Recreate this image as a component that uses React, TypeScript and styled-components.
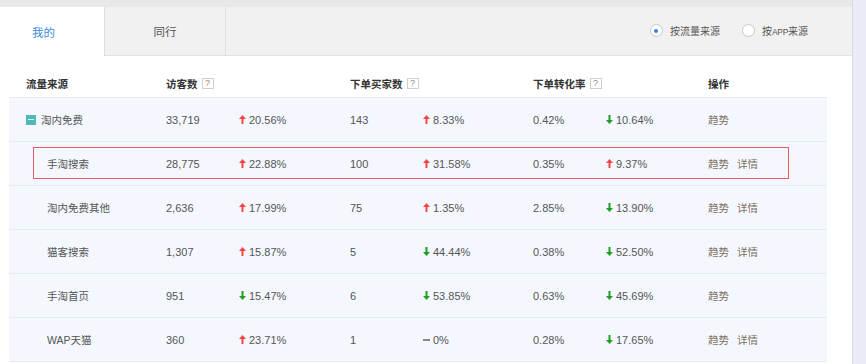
import styled, { createGlobalStyle } from 'styled-components';

const GlobalStyle = createGlobalStyle`
    html, body {
        margin: 0;
        padding: 0;
        background: #e9ecf6;
    }
    body {
        font-family: "Liberation Sans", Arial, "Noto Sans CJK SC", sans-serif;
        font-size: 11px;
        color: #555;
    }
`;

const Page = styled.div`
    display: flex;
    width: 866px;
    height: 364px;
    overflow: hidden;
    background: #e9ecf6;
`;

const Panel = styled.div`
    width: 852px;
    background: #fff;
    border-right: 1px solid #dcdcdc;
    display: flex;
    flex-direction: column;
`;

const TopBand = styled.div`
    height: 7px;
    background: #e8e8e8;
`;

const TabBar = styled.div`
    display: flex;
    height: 48px;
    background: #f1f1f1;
    border-bottom: 1px solid #e2e2e2;
`;

const Tab = styled.div<{ $active?: boolean; $width: number }>`
    width: ${(p) => p.$width}px;
    display: flex;
    align-items: center;
    justify-content: center;
    box-sizing: border-box;
    font-size: 11.5px;
    color: ${(p) => (p.$active ? '#3c8de0' : '#555')};
    background: ${(p) => (p.$active ? '#fff' : 'transparent')};
    border-right: 1px solid #dedede;
    margin-bottom: ${(p) => (p.$active ? '-1px' : '0')};
    padding-right: ${(p) => (p.$active ? '17px' : '0')};
`;

const RadioGroup = styled.div`
    margin-left: auto;
    display: flex;
    align-items: center;
    gap: 22px;
    padding-right: 44px;
    padding-bottom: 1px;
`;

const RadioItem = styled.label`
    display: flex;
    align-items: center;
    gap: 7px;
    font-size: 10px;
    color: #555;
`;

const Latin = styled.span`
    font-size: 8.5px;
    letter-spacing: -0.3px;
`;

const RadioCircle = styled.span<{ $checked?: boolean }>`
    width: 11px;
    height: 11px;
    border-radius: 50%;
    border: 1px solid #c8c8c8;
    background: #fff;
    display: flex;
    align-items: center;
    justify-content: center;
    &::after {
        content: '';
        width: 4px;
        height: 4px;
        border-radius: 50%;
        background: ${(p) => (p.$checked ? '#2f86e8' : 'transparent')};
    }
`;

const Content = styled.div`
    padding: 14px 25px 0 9px;
`;

const columns = '157px 73px 111px 73px 110px 73px 102px 1fr';

const HeaderRow = styled.div`
    display: grid;
    grid-template-columns: ${columns};
    height: 27px;
    align-items: center;
    border-bottom: 1px solid #e6ebf3;
    font-weight: bold;
    font-size: 10.5px;
    color: #333;
`;

const HeaderCell = styled.div<{ $span?: number; $pad?: number }>`
    grid-column: span ${(p) => p.$span ?? 1};
    padding-left: ${(p) => p.$pad ?? 0}px;
    display: flex;
    align-items: center;
    gap: 4px;
`;

const Help = styled.span`
    width: 10px;
    height: 9px;
    border: 1px solid #cfcfcf;
    font-size: 9px;
    line-height: 9px;
    text-align: center;
    color: #888;
    font-weight: normal;
`;

const Row = styled.div<{ $highlight?: boolean }>`
    position: relative;
    display: grid;
    grid-template-columns: ${columns};
    height: 43px;
    align-items: center;
    background: #f4f8fe;
    border-bottom: 1px solid #e6ebf2;
    color: #555;
    &::after {
        content: '';
        display: ${(p) => (p.$highlight ? 'block' : 'none')};
        position: absolute;
        left: 24px;
        top: 5px;
        width: 754px;
        height: 30px;
        border: 1px solid #e85a64;
    }
`;

const NameCell = styled.div<{ $level: number }>`
    display: flex;
    align-items: center;
    gap: 5px;
    font-size: 10.5px;
    padding-left: ${(p) => (p.$level === 0 ? 17 : 38)}px;
`;

const Collapse = styled.span`
    width: 10px;
    height: 10px;
    background: #4fb9b9;
    display: flex;
    align-items: center;
    justify-content: center;
    &::after {
        content: '';
        width: 6px;
        height: 1px;
        background: #e4f4f4;
    }
`;

const Change = styled.div`
    display: flex;
    align-items: center;
    gap: 3px;
`;

const Dash = styled.span`
    width: 7px;
    height: 2px;
    background: #888;
`;

const Actions = styled.div`
    display: flex;
    gap: 8px;
    font-size: 10.5px;
    color: #7d6e5f;
`;

type Trend = 'up' | 'down' | 'flat';

const Arrow = ({ trend }: { trend: Trend }) => {
    if (trend === 'flat') return <Dash />;
    const color = trend === 'up' ? '#f04646' : '#1f9e1f';
    return (
        <svg width="7" height="9" viewBox="0 0 7 9">
            {trend === 'up' ? (
                <>
                    <polygon points="3.5,0 7,4 0,4" fill={color} />
                    <rect x="2.5" y="4" width="2" height="5" fill={color} />
                </>
            ) : (
                <>
                    <rect x="2.5" y="0" width="2" height="5" fill={color} />
                    <polygon points="0,5 7,5 3.5,9" fill={color} />
                </>
            )}
        </svg>
    );
};

const ChangeValue = ({ trend, value }: { trend: Trend; value: string }) => (
    <Change>
        <Arrow trend={trend} />
        <span>{value}</span>
    </Change>
);

type Item = {
    name: string;
    level: number;
    visitors: string;
    vTrend: Trend;
    vChange: string;
    buyers: string;
    bTrend: Trend;
    bChange: string;
    rate: string;
    rTrend: Trend;
    rChange: string;
    detail: boolean;
    highlight?: boolean;
};

const rows: Item[] = [
    { name: '淘内免费', level: 0, visitors: '33,719', vTrend: 'up', vChange: '20.56%', buyers: '143', bTrend: 'up', bChange: '8.33%', rate: '0.42%', rTrend: 'down', rChange: '10.64%', detail: false },
    { name: '手淘搜索', level: 1, visitors: '28,775', vTrend: 'up', vChange: '22.88%', buyers: '100', bTrend: 'up', bChange: '31.58%', rate: '0.35%', rTrend: 'up', rChange: '9.37%', detail: true, highlight: true },
    { name: '淘内免费其他', level: 1, visitors: '2,636', vTrend: 'up', vChange: '17.99%', buyers: '75', bTrend: 'up', bChange: '1.35%', rate: '2.85%', rTrend: 'down', rChange: '13.90%', detail: true },
    { name: '猫客搜索', level: 1, visitors: '1,307', vTrend: 'up', vChange: '15.87%', buyers: '5', bTrend: 'down', bChange: '44.44%', rate: '0.38%', rTrend: 'down', rChange: '52.50%', detail: true },
    { name: '手淘首页', level: 1, visitors: '951', vTrend: 'down', vChange: '15.47%', buyers: '6', bTrend: 'down', bChange: '53.85%', rate: '0.63%', rTrend: 'down', rChange: '45.69%', detail: false },
    { name: 'WAP天猫', level: 1, visitors: '360', vTrend: 'up', vChange: '23.71%', buyers: '1', bTrend: 'flat', bChange: '0%', rate: '0.28%', rTrend: 'down', rChange: '17.65%', detail: true },
];

const App = () => {
    return (
        <Page>
            <GlobalStyle />
            <Panel>
                <TopBand />
                <TabBar>
                    <Tab $active $width={105}>我的</Tab>
                    <Tab $width={121}>同行</Tab>
                    <RadioGroup>
                        <RadioItem>
                            <RadioCircle $checked />
                            按流量来源
                        </RadioItem>
                        <RadioItem>
                            <RadioCircle />
                            <span>
                                按<Latin>APP</Latin>来源
                            </span>
                        </RadioItem>
                    </RadioGroup>
                </TabBar>
                <Content>
                    <HeaderRow>
                        <HeaderCell $pad={17}>流量来源</HeaderCell>
                        <HeaderCell $span={2}>
                            访客数 <Help>?</Help>
                        </HeaderCell>
                        <HeaderCell $span={2}>
                            下单买家数 <Help>?</Help>
                        </HeaderCell>
                        <HeaderCell $span={2}>
                            下单转化率 <Help>?</Help>
                        </HeaderCell>
                        <HeaderCell>操作</HeaderCell>
                    </HeaderRow>
                    {rows.map((r) => (
                        <Row key={r.name} $highlight={r.highlight}>
                            <NameCell $level={r.level}>
                                {r.level === 0 && <Collapse />}
                                {r.name}
                            </NameCell>
                            <div>{r.visitors}</div>
                            <ChangeValue trend={r.vTrend} value={r.vChange} />
                            <div>{r.buyers}</div>
                            <ChangeValue trend={r.bTrend} value={r.bChange} />
                            <div>{r.rate}</div>
                            <ChangeValue trend={r.rTrend} value={r.rChange} />
                            <Actions>
                                <span>趋势</span>
                                {r.detail && <span>详情</span>}
                            </Actions>
                        </Row>
                    ))}
                </Content>
            </Panel>
        </Page>
    );
};

export default App;
